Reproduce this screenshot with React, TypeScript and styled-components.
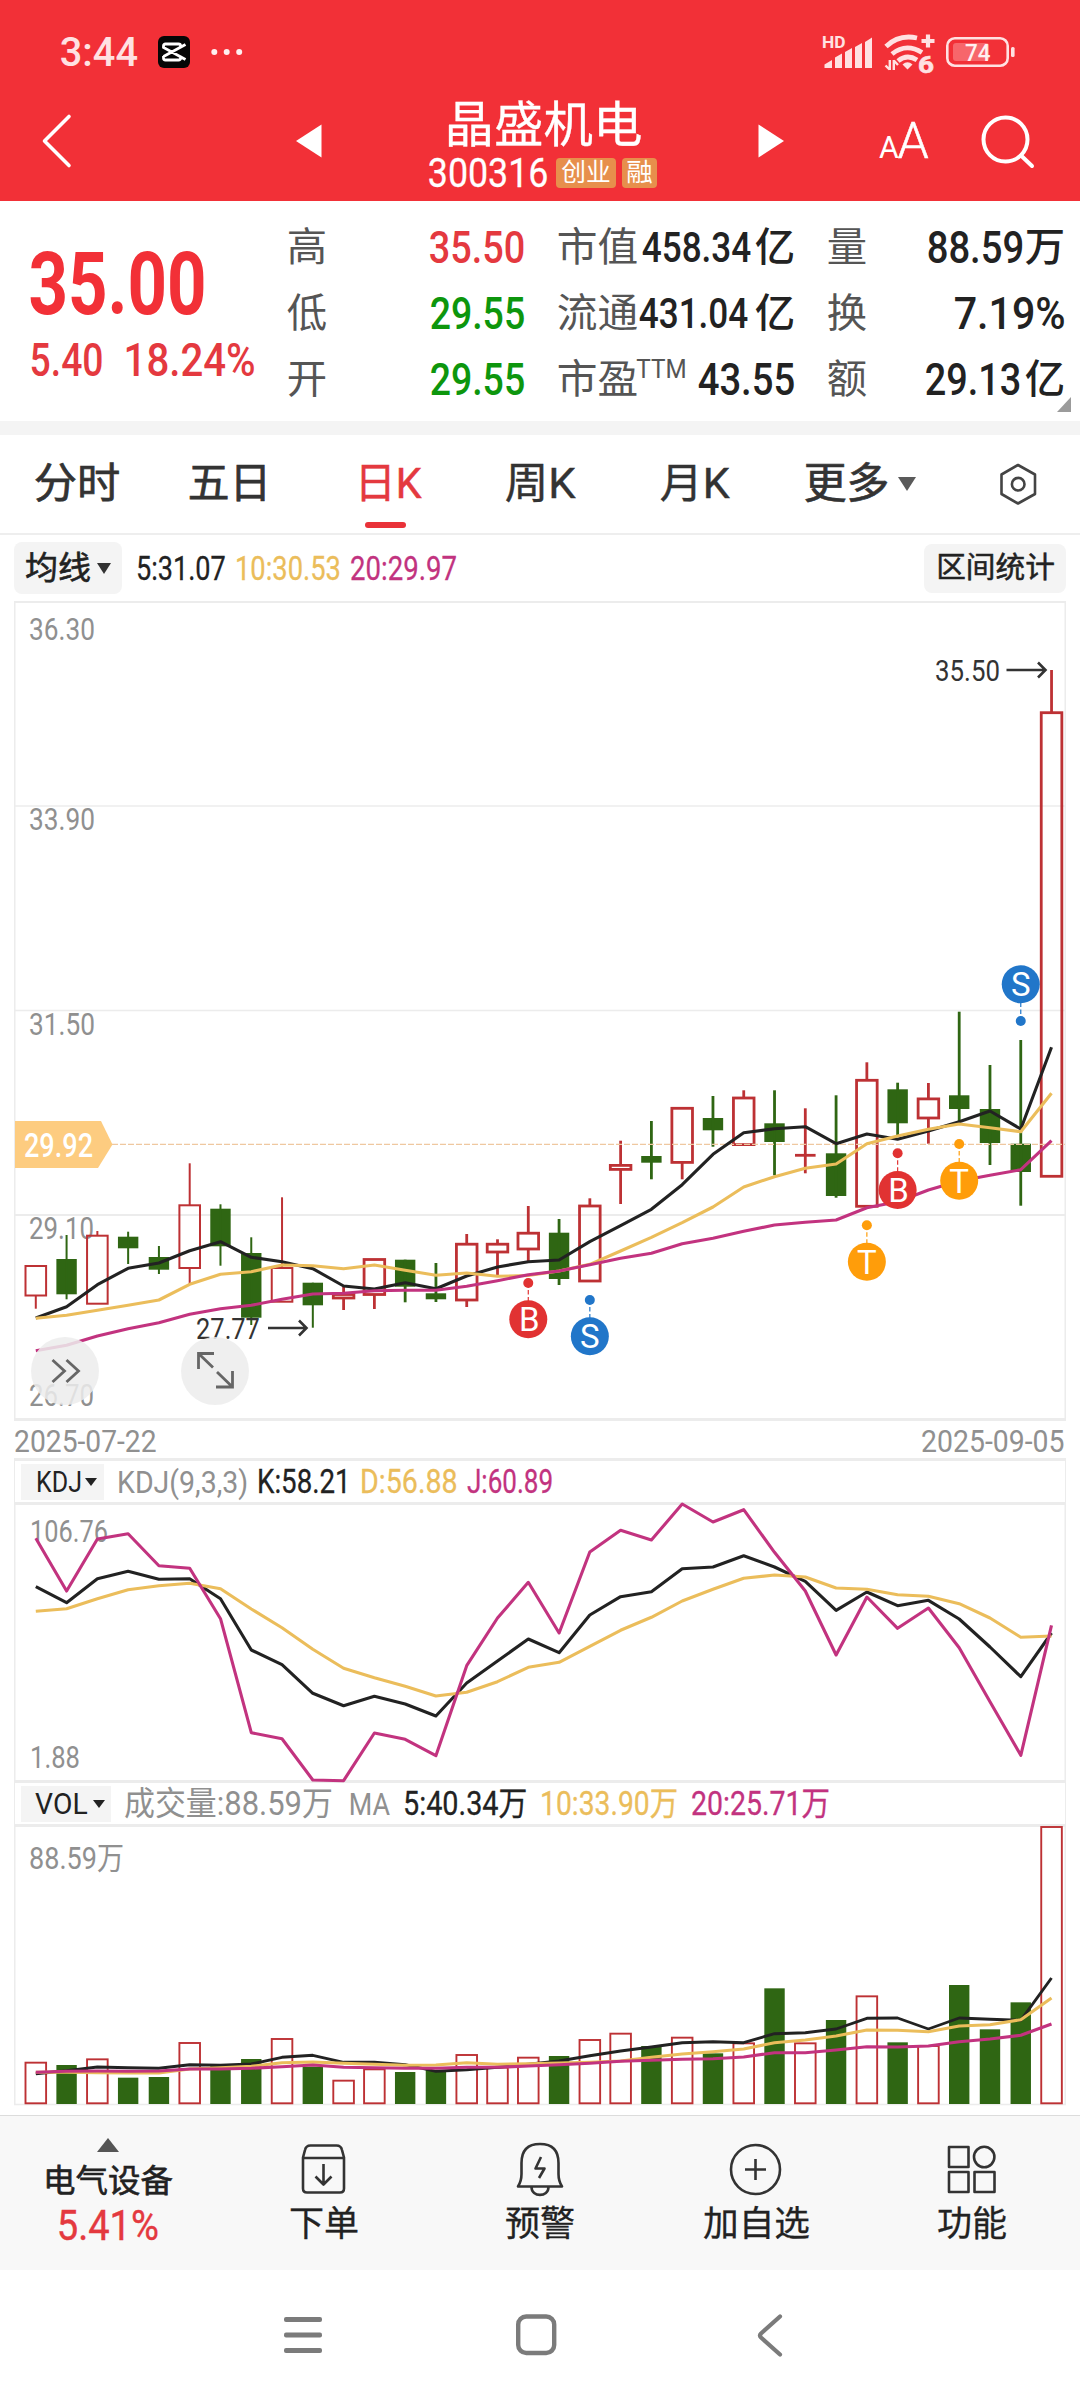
import React, { useLayoutEffect, useRef, useState } from "react";
import styled, { createGlobalStyle } from "styled-components";

const FONT = `Roboto, "Noto Sans CJK SC", "Liberation Sans", sans-serif`;

const C = {
  brand: "#f23037",
  up: "#e4393f",
  down: "#0d960d",
  ink: "#222222",
  label: "#555555",
  mute: "#909090",
  yellow: "#ebbd5b",
  magenta: "#c2337f",
  candleUp: "#bd3134",
  candleDown: "#2f6613",
  line: "#ececec",
};

const GlobalStyle = createGlobalStyle`
  * { box-sizing: border-box; }
  body { margin: 0; background: #fff; font-family: ${FONT}; }
  svg { display: block; }
`;

/* ---------- text set to a given width ---------- */

const FitBox = styled.span<{ $w: number; $lh: number }>`
  display: block;
  flex: none;
  width: ${(p) => p.$w}px;
  height: ${(p) => p.$lh}px;
  line-height: ${(p) => p.$lh}px;
`;
const FitInner = styled.span<{ $size: number; $color: string; $weight: number; $stroke: number }>`
  display: inline-block;
  white-space: pre;
  transform-origin: 0 50%;
  font-size: ${(p) => p.$size}px;
  font-weight: ${(p) => p.$weight};
  color: ${(p) => p.$color};
  -webkit-text-stroke: ${(p) => p.$stroke}px ${(p) => p.$color};
`;

type FitProps = {
  children: string;
  w: number;
  size: number;
  lh?: number;
  color?: string;
  weight?: number;
  stroke?: number;
};

function Fit({ children, w, size, lh, color = C.ink, weight = 400, stroke = 0 }: FitProps) {
  const ref = useRef<HTMLSpanElement>(null);
  const [natural, setNatural] = useState(0);
  useLayoutEffect(() => {
    if (ref.current) setNatural(ref.current.offsetWidth);
  }, [children, size, weight]);
  const scale = natural ? (w + size * 0.06) / natural : 1;
  return (
    <FitBox $w={w} $lh={lh ?? Math.round(size * 1.2)}>
      <FitInner
        ref={ref}
        $size={size}
        $color={color}
        $weight={weight}
        $stroke={stroke}
        style={{ transform: `translateX(${-size * 0.03}px) scaleX(${scale})` }}
      >
        {children}
      </FitInner>
    </FitBox>
  );
}

/* ---------- page ---------- */

const Page = styled.div`
  width: 1080px;
  height: 2400px;
  display: flex;
  flex-direction: column;
  background: #fff;
  overflow: hidden;
`;

/* ---------- header ---------- */

const Header = styled.header`
  height: 201px;
  flex: none;
  background: ${C.brand};
`;
const StatusBar = styled.div`
  height: 80px;
  padding: 24px 65px 0 61px;
  display: flex;
  align-items: center;
  justify-content: space-between;
`;
const StatusGroup = styled.div<{ $gap: number }>`
  display: flex;
  align-items: center;
  gap: ${(p) => p.$gap}px;
`;
const TitleBar = styled.div`
  height: 121px;
  display: grid;
  grid-template-columns: 296px 133px 329px 122px 100px 100px;
  align-items: center;
`;
const BackCell = styled.div`
  padding-left: 41px;
`;
const TitleColumn = styled.div`
  width: 228px;
  align-self: start;
  margin-top: 20px;
  display: flex;
  flex-direction: column;
  align-items: center;
`;
const CodeRow = styled.div`
  height: 44px;
  display: flex;
  align-items: center;
`;
const Badge = styled.span<{ $w: number; $ml: number }>`
  width: ${(p) => p.$w}px;
  height: 30px;
  margin-left: ${(p) => p.$ml}px;
  border-radius: 4px;
  background: #e78f4c;
  display: flex;
  align-items: center;
  justify-content: center;
`;
const TextSize = styled.div`
  display: flex;
  align-items: baseline;
  gap: 1px;
`;

/* ---------- quote ---------- */

const Quote = styled.section`
  position: relative;
  height: 220px;
  flex: none;
  display: flex;
`;
const PriceBlock = styled.div`
  width: 288px;
  padding: 43px 0 0 31px;
`;
const ChangeRow = styled.div`
  display: flex;
  gap: 23px;
  margin-top: 13px;
`;
const QuoteGrid = styled.div`
  padding-top: 14px;
  display: grid;
  grid-template-columns: 236px 236px 236px;
  grid-auto-rows: 66px;
  column-gap: 34px;
`;
const QuoteCell = styled.div`
  display: flex;
  align-items: center;
  justify-content: space-between;
`;
const Inline = styled.div<{ $gap?: number }>`
  display: flex;
  align-items: center;
  gap: ${(p) => p.$gap ?? 0}px;
`;
const Raised = styled.div`
  align-self: flex-start;
  margin-top: -2px;
`;
const Corner = styled.span`
  position: absolute;
  right: 9px;
  bottom: 9px;
  border-left: 14px solid transparent;
  border-bottom: 15px solid #9b9b9b;
`;
const Band = styled.div`
  height: 14px;
  flex: none;
  background: #f4f4f4;
`;

/* ---------- tabs ---------- */

const Tabs = styled.nav`
  height: 100px;
  flex: none;
  padding-left: 35px;
  border-bottom: 2px solid #eeeeee;
  display: grid;
  grid-template-columns: 154px 167px 150px 155px 144px 195px 40px;
`;
const Tab = styled.div<{ $active?: boolean }>`
  position: relative;
  height: 98px;
  display: flex;
  align-items: center;
  &::after {
    content: "";
    display: ${(p) => (p.$active ? "block" : "none")};
    position: absolute;
    left: 9px;
    bottom: 5px;
    width: 41px;
    height: 6px;
    border-radius: 3px;
    background: #e93239;
  }
`;
const Caret = styled.i<{ $w: number; $h: number; $color: string; $up?: boolean; $ml?: number }>`
  flex: none;
  margin-left: ${(p) => p.$ml ?? 0}px;
  border-left: ${(p) => p.$w / 2}px solid transparent;
  border-right: ${(p) => p.$w / 2}px solid transparent;
  ${(p) =>
    p.$up
      ? `border-bottom: ${p.$h}px solid ${p.$color};`
      : `border-top: ${p.$h}px solid ${p.$color};`}
`;

/* ---------- indicator bars ---------- */

const MaBar = styled.div`
  height: 66px;
  flex: none;
  padding: 0 14px;
  display: flex;
  align-items: center;
`;
const Chip = styled.div<{ $w: number; $h: number; $pl: number; $r?: number }>`
  width: ${(p) => p.$w}px;
  height: ${(p) => p.$h}px;
  padding-left: ${(p) => p.$pl}px;
  border-radius: ${(p) => p.$r ?? 0}px;
  background: #f4f4f4;
  display: flex;
  align-items: center;
  flex: none;
`;
const Values = styled.div<{ $ml: number }>`
  display: flex;
  align-items: center;
  flex: 1;
  gap: 11px;
  margin-left: ${(p) => p.$ml}px;
`;
const DateRow = styled.div`
  height: 37px;
  flex: none;
  padding: 3px 16px 0 15px;
  display: flex;
  align-items: center;
  justify-content: space-between;
`;
const IndicatorBar = styled.div<{ $h: number; $top: number }>`
  height: ${(p) => p.$h}px;
  flex: none;
  margin: 0 14px;
  padding-left: 6px;
  border: solid ${C.line};
  border-width: ${(p) => p.$top}px 1px 0;
  display: flex;
  align-items: center;
`;
const ChartArea = styled.div`
  position: relative;
  flex: none;
`;
const RoundButton = styled.button<{ $left: number }>`
  position: absolute;
  left: ${(p) => p.$left}px;
  bottom: 16px;
  width: 68px;
  height: 68px;
  padding: 0;
  border: 0;
  border-radius: 50%;
  background: rgba(236, 236, 236, 0.86);
`;

/* ---------- bottom ---------- */

const BottomNav = styled.nav`
  height: 155px;
  flex: none;
  background: #f8f8f8;
  border-top: 1px solid #dcdcdc;
  display: grid;
  grid-template-columns: repeat(5, 216px);
`;
const NavItem = styled.div`
  display: flex;
  flex-direction: column;
  align-items: center;
  padding-top: 25px;
`;
const SectorItem = styled(NavItem)`
  padding-top: 22px;
`;
const NavLabel = styled.div`
  margin-top: 10px;
`;
const SystemNav = styled.footer`
  height: 130px;
  flex: none;
  display: grid;
  grid-template-columns: 284px 232px 240px 1fr;
  align-items: center;
`;

/* ---------- data (vertical positions on the page) ---------- */

const X = (i: number) => 35.8 + i * 30.78;

// [kind, bodyTop, bodyBottom, high, low]
type Candle = ["r" | "g", number, number, number, number];
const candles: Candle[] = [
  ["r", 1266, 1295.5, 1266, 1308.7],
  ["g", 1259, 1294.3, 1235, 1299.3],
  ["r", 1235.7, 1303.7, 1231, 1303.7],
  ["g", 1236.7, 1248.3, 1231.7, 1264],
  ["g", 1257, 1269.7, 1246, 1274],
  ["r", 1205.3, 1268, 1163.3, 1284.7],
  ["g", 1208.7, 1246.3, 1204.3, 1265.7],
  ["g", 1253, 1317.7, 1237.3, 1325],
  ["r", 1268, 1301.7, 1197.3, 1301.7],
  ["g", 1282.7, 1305.3, 1282.7, 1327.7],
  ["r", 1294.5, 1298, 1287, 1310],
  ["r", 1259.5, 1294.5, 1259.5, 1309],
  ["g", 1259.7, 1286.7, 1259.7, 1302.3],
  ["g", 1293.3, 1299.3, 1263, 1302],
  ["r", 1244.2, 1300, 1234, 1307],
  ["r", 1244.2, 1252, 1239.3, 1275.7],
  ["r", 1233.2, 1249, 1206, 1262.7],
  ["g", 1232.7, 1279, 1219, 1285],
  ["r", 1206, 1281, 1198.3, 1281],
  ["r", 1165.4, 1169.4, 1140.7, 1204],
  ["g", 1156, 1162.7, 1121, 1179.3],
  ["r", 1108.3, 1162.4, 1108.3, 1179.3],
  ["g", 1118, 1130.3, 1096, 1146.7],
  ["r", 1098, 1144.6, 1090.3, 1144.6],
  ["g", 1123.3, 1142, 1090.3, 1175.3],
  ["r", 1155.3, 1155.3, 1108.3, 1173.3],
  ["g", 1153.3, 1196, 1095.3, 1197.7],
  ["r", 1080.3, 1206.3, 1062.3, 1206.3],
  ["g", 1089.3, 1123.3, 1082.7, 1137],
  ["r", 1098.9, 1118, 1083, 1143.7],
  ["g", 1095.3, 1109, 1011.7, 1123],
  ["g", 1109, 1143, 1065, 1165],
  ["g", 1143.7, 1172, 1040, 1205.7],
  ["r", 712.7, 1176.3, 670, 1176.3],
];

const ma5 = [1318, 1306.7, 1284.7, 1268.3, 1263, 1250.7, 1241.7, 1257.3, 1261.7, 1268.7, 1286, 1289, 1282.7, 1288.7, 1276, 1267, 1261.7, 1260, 1241.7, 1225.7, 1209.3, 1184.7, 1154.3, 1132.7, 1128.7, 1126.7, 1143.7, 1134, 1139.3, 1131, 1121.7, 1111, 1129, 1047.3];
const ma10 = [1318.3, 1315.3, 1310.3, 1305.3, 1300, 1284.3, 1274.3, 1271.7, 1265, 1265.7, 1268.7, 1265, 1270.3, 1275.3, 1273, 1276.3, 1275.5, 1271, 1264.3, 1251, 1237.3, 1222.7, 1207, 1187, 1176.7, 1168.3, 1164, 1143.7, 1136, 1129.3, 1124, 1127.7, 1131.7, 1093.3];
const ma20 = [1350.7, 1345.3, 1336, 1328.7, 1322.7, 1314.3, 1308.7, 1305.3, 1299.3, 1294, 1293.3, 1290.7, 1290.3, 1290.3, 1286.3, 1280.7, 1274.7, 1271, 1264.7, 1258.3, 1253.3, 1243.7, 1238.3, 1231.3, 1225, 1222.3, 1220, 1207.7, 1201.7, 1190, 1181, 1175.3, 1169.7, 1140.7];

// offsets in thirds of a pixel below the top of each sub chart
const third = (base: number, list: number[]) => list.map((v) => base + v / 3);
const kdjJ = third(1410, [385, 543, 387, 371, 467, 475, 626, 968, 986, 1110, 1112, 969, 988, 1037, 767, 624, 517, 669, 426, 361, 390, 282, 336, 299, 427, 543, 735, 561, 655, 594, 713, 875, 1036, 646]);
const kdjK = third(1410, [530, 578, 506, 484, 508, 506, 566, 720, 764, 850, 887, 859, 882, 918, 819, 753, 687, 728, 615, 560, 545, 476, 471, 437, 471, 514, 601, 546, 587, 571, 627, 711, 800, 669]);
const kdjD = third(1410, [604, 596, 566, 539, 527, 520, 536, 597, 653, 718, 775, 803, 829, 858, 847, 815, 772, 757, 709, 661, 622, 573, 538, 505, 495, 501, 534, 538, 554, 559, 581, 624, 682, 678]);

const volTop = third(1770, [878, 885, 868, 923, 921, 819, 885, 867, 807, 890, 932, 898, 906, 900, 855, 893, 863, 858, 810, 791, 828, 803, 850, 820, 655, 820, 750, 679, 817, 828, 645, 778, 697, 171]);
const vol5 = third(1770, [911, 902, 891, 893, 895, 884, 886, 882, 862, 856, 877, 877, 884, 904, 899, 892, 883, 873, 857, 843, 831, 818, 815, 818, 791, 788, 777, 745, 744, 777, 744, 748, 751, 624]);
const vol10 = third(1770, [907, 907, 908, 909, 909, 897, 893, 889, 878, 876, 880, 883, 886, 885, 878, 883, 881, 879, 877, 873, 862, 852, 845, 837, 818, 810, 798, 780, 781, 785, 768, 764, 749, 684]);
const vol20 = third(1770, [907, 904, 903, 904, 903, 897, 897, 895, 890, 885, 892, 893, 895, 895, 892, 892, 888, 884, 880, 874, 871, 868, 866, 861, 848, 848, 840, 830, 831, 828, 815, 807, 796, 762]);

type Marker = { i: number; dot: number; cy: number; t: string; c: string };
const markers: Marker[] = [
  { i: 16, dot: 1283, cy: 1319.3, t: "B", c: "#e13232" },
  { i: 18, dot: 1300, cy: 1336.3, t: "S", c: "#2176c9" },
  { i: 27, dot: 1225.3, cy: 1261.7, t: "T", c: "#ff9d0a" },
  { i: 28, dot: 1153.3, cy: 1190, t: "B", c: "#e13232" },
  { i: 30, dot: 1144, cy: 1180.7, t: "T", c: "#ff9d0a" },
  { i: 32, dot: 1021, cy: 984.3, t: "S", c: "#2176c9" },
];

/* ---------- chart parts ---------- */

const Curve = ({ ys, color, w = 3.1 }: { ys: number[]; color: string; w?: number }) => (
  <polyline
    points={ys.map((y, i) => `${X(i).toFixed(1)},${y.toFixed(1)}`).join(" ")}
    fill="none"
    stroke={color}
    strokeWidth={w}
    strokeLinejoin="round"
  />
);

const Rule = ({ y, w = 2 }: { y: number; w?: number }) => (
  <line x1={14} x2={1066} y1={y} y2={y} stroke={C.line} strokeWidth={w} />
);

const Sides = ({ a, b }: { a: number; b: number }) => (
  <g stroke={C.line} strokeWidth={1.5}>
    <line x1={14.75} x2={14.75} y1={a} y2={b} />
    <line x1={1065.25} x2={1065.25} y1={a} y2={b} />
  </g>
);

const Label = ({ x, cy, w, size = 31, color = C.mute, weight = 400, children }: {
  x: number; cy: number; w: number; size?: number; color?: string; weight?: number; children: string;
}) => (
  <text
    x={x - size * 0.03}
    y={cy + size * 0.356}
    fontSize={size}
    fontWeight={weight}
    fill={color}
    fontFamily={FONT}
    textLength={w + size * 0.06}
    lengthAdjust="spacingAndGlyphs"
  >
    {children}
  </text>
);

const PriceChart = () => (
  <svg width={1080} height={820} viewBox="0 601 1080 820">
    <Sides a={601} b={1420} />
    <Rule y={602} />
    <Rule y={806} w={1.5} />
    <Rule y={1010.5} w={1.5} />
    <Rule y={1215} />
    <Rule y={1419.5} w={3} />
    <Label x={30} cy={629} w={64}>36.30</Label>
    <Label x={30} cy={818.5} w={64}>33.90</Label>
    <Label x={30} cy={1023.5} w={64}>31.50</Label>
    <Label x={30} cy={1227.5} w={63}>29.10</Label>
    <Label x={30} cy={1395} w={63}>26.70</Label>
    {candles.map(([k, t, b, h, l], i) => {
      const sw = i < 10 ? 2 : 2.8;
      const x = X(i);
      return k === "g" ? (
        <g key={i} fill={C.candleDown}>
          <rect x={x - 10.2} y={t} width={20.4} height={b - t} />
          <rect x={x - sw / 2} y={h} width={sw} height={l - h} />
        </g>
      ) : (
        <g key={i} fill="none" stroke={C.candleUp} strokeWidth={sw}>
          {h < t && <line x1={x} x2={x} y1={h} y2={t} />}
          {l > b && <line x1={x} x2={x} y1={b} y2={l} />}
          {t === b ? <line x1={x - 10.3} x2={x + 10.3} y1={t} y2={t} /> : <rect x={x - 10.3} y={t} width={20.6} height={b - t} />}
        </g>
      );
    })}
    <line x1={112} x2={1065} y1={1144.4} y2={1144.4} stroke="#efc8a0" strokeWidth={1.4} strokeDasharray="6 2" />
    <Curve ys={ma5} color={C.ink} />
    <Curve ys={ma10} color={C.yellow} />
    <Curve ys={ma20} color={C.magenta} />
    <polygon points="15,1121 101,1121 112.5,1144.4 98,1168 15,1168" fill="#fdcc80" />
    <Label x={25} cy={1145.3} w={67} size={34} color="#ffffff" weight={500}>29.92</Label>
    <Label x={197} cy={1328} w={62} size={30} color="#333333">27.77</Label>
    <Label x={936} cy={670.5} w={63} size={30} color="#333333">35.50</Label>
    <g fill="none" stroke="#333333" strokeWidth={2.6}>
      <path d="M268 1328H306M299 1320.500L306.500 1328L299 1335.500" />
      <path d="M1006.500 670H1045M1038 662.500L1045.500 670L1038 677.500" />
    </g>
    {markers.map(({ i, dot, cy, t, c }) => (
      <g key={i}>
        <line x1={X(i)} x2={X(i)} y1={dot} y2={cy} stroke={c} strokeWidth={1.2} strokeDasharray="4.500 2.500" />
        <circle cx={X(i)} cy={dot} r={5} fill={c} />
        <circle cx={X(i)} cy={cy} r={19} fill={c} />
        <text x={X(i) + (t === "B" ? 1 : 0)} y={cy + 12} fontSize={33} textAnchor="middle" fill="#fff" fontFamily={FONT}>
          {t}
        </text>
      </g>
    ))}
  </svg>
);

const KdjChart = () => (
  <svg width={1080} height={281} viewBox="0 1502 1080 281">
    <Sides a={1502} b={1783} />
    <Rule y={1503.5} w={3} />
    <Rule y={1781.5} w={3} />
    <Label x={31} cy={1530.500} w={76}>106.76</Label>
    <Label x={31} cy={1756.500} w={48}>1.88</Label>
    <Curve ys={kdjK} color={C.ink} />
    <Curve ys={kdjD} color={C.yellow} />
    <Curve ys={kdjJ} color={C.magenta} />
  </svg>
);

const VolChart = () => (
  <svg width={1080} height={291} viewBox="0 1824 1080 291">
    <Sides a={1824} b={2105} />
    <Rule y={1825.5} w={3} />
    <Rule y={2104.5} w={1.5} />
    <Label x={30} cy={1857.500} w={93}>88.59万</Label>
    {candles.map(([k], i) =>
      k === "g" ? (
        <rect key={i} x={X(i) - 10.2} y={volTop[i]} width={20.4} height={2104 - volTop[i]} fill={C.candleDown} />
      ) : (
        <rect key={i} x={X(i) - 10.3} y={volTop[i]} width={20.6} height={2103.3 - volTop[i]} fill="none" stroke={C.candleUp} strokeWidth={1.9} />
      )
    )}
    <Curve ys={vol5} color={C.ink} w={2.9} />
    <Curve ys={vol10} color={C.yellow} />
    <Curve ys={vol20} color={C.magenta} />
  </svg>
);

/* ---------- icons ---------- */

const soft = "#ffe1e2";

const AppIcon = () => (
  <svg width={32} height={32} viewBox="0 0 32 32">
    <rect width={32} height={32} rx={6} fill="#060606" />
    <path d="M22.500 11.500V9.500Q22.500 8 20.500 8H7.500Q5.500 8 5.500 10V11.500L27.500 23.500M5.500 20V22Q5.500 24 7.500 24H20.500Q22.500 24 22.500 22V20.500M5.500 20.500L27.500 8.500" fill="none" stroke="#fff" strokeWidth={2.8} />
  </svg>
);
const Dots = () => (
  <svg width={32} height={8} viewBox="0 0 32 8" fill="#fff0f0">
    <circle cx={3.300} cy={4} r={3} />
    <circle cx={15.700} cy={4} r={3} />
    <circle cx={28.200} cy={4} r={3} />
  </svg>
);
const StatusIcons = () => (
  <svg width={193} height={56} viewBox="822 24 193 56">
    <text x={822} y={48} fontSize={16} fontWeight={700} fill={soft} fontFamily={FONT} textLength={23.500} lengthAdjust="spacingAndGlyphs">HD</text>
    <g fill={soft}>
      <path d="M824.500 68V64.500L832 60V68Z" />
      <path d="M835 68V57.500L842 53.500V68Z" />
      <path d="M845 68V52L852 48V68Z" />
      <path d="M855 68V47L862 43V68Z" />
      <path d="M865 68V42L872 37.500V68Z" />
    </g>
    <g fill="none" stroke={soft} strokeWidth={4.800}>
      <path d="M886 46.500Q899 34 917 38" />
      <path d="M892 54Q906 42.500 922 52.500" />
      <path d="M898 61Q907 53.500 917 60" />
      <path d="M921.500 41H934.500M928 34.500V47.500" strokeWidth={4.200} />
    </g>
    <path d="M902.500 64.500Q907.500 60 912.500 64.500L907.500 69.500Z" fill={soft} />
    <g fill="none" stroke={soft} strokeWidth={2.400}>
      <path d="M889.800 60V70M885.500 65.500L889.500 69.500" />
      <path d="M893.800 70V60M893.800 60.500L898 65" />
    </g>
    <text x={918} y={72.500} fontSize={23} fontWeight={700} fill={soft} stroke={soft} strokeWidth={0.600} fontFamily={FONT} textLength={16} lengthAdjust="spacingAndGlyphs">6</text>
    <rect x={947.300} y={38.300} width={60.400} height={27.400} rx={7.500} fill="none" stroke={soft} strokeWidth={2.600} />
    <rect x={953} y={43} width={36} height={18} rx={3} fill="#f7666b" />
    <rect x={1011} y={47} width={3.600} height={10} rx={1.500} fill={soft} />
    <text x={965} y={60.500} fontSize={23} fontWeight={500} fill="#fff0f0" fontFamily={FONT} textLength={25.500} lengthAdjust="spacingAndGlyphs">74</text>
  </svg>
);
const BackIcon = () => (
  <svg width={32} height={56} viewBox="41 112.500 32 56" fill="none" stroke="#fff" strokeWidth={3.600} strokeLinecap="round" strokeLinejoin="round">
    <path d="M69 116L44.500 140.500L69 165" />
  </svg>
);
const Arrow = ({ right }: { right?: boolean }) => (
  <svg width={26} height={34} viewBox="0 0 26 34">
    <path d={right ? "M0.500 0.500L26 17L0.500 33.500Z" : "M25.500 0.500L0 17L25.500 33.500Z"} fill="#fff" />
  </svg>
);
const SearchIcon = () => (
  <svg width={56} height={56} viewBox="980 112 56 56" fill="none" stroke="#fff" strokeWidth={4} strokeLinecap="round">
    <circle cx={1005.500} cy={138.500} r={22} />
    <path d="M1021 154.500L1032 165" />
  </svg>
);
const HexIcon = () => (
  <svg width={40} height={42} viewBox="0 0 40 42" fill="none" stroke="#444" strokeWidth={2.600} strokeLinejoin="round">
    <path d="M18 2L35 11.500V31L18 40.500L1.500 31V11.500Z" />
    <circle cx={18.200} cy={21.200} r={6.300} />
  </svg>
);
const NavSvg = ({ children }: { children: React.ReactNode }) => (
  <svg width={56} height={56} viewBox="0 0 56 56" fill="none" stroke="#333" strokeWidth={2.600} strokeLinejoin="round">
    {children}
  </svg>
);

/* ---------- app ---------- */

const quote: { label: string; lw?: number; sup?: boolean; value: string; vw: number; size?: number; unit?: string; gap?: number; color?: string }[] = [
  { label: "高", value: "35.50", vw: 94, color: C.up },
  { label: "市值", lw: 79, value: "458.34", vw: 107, size: 42, unit: "亿", gap: 6 },
  { label: "量", value: "88.59", vw: 95, unit: "万", gap: 3 },
  { label: "低", value: "29.55", vw: 93, color: C.down },
  { label: "流通", lw: 79, value: "431.04", vw: 107, size: 42, unit: "亿", gap: 9 },
  { label: "换", value: "7.19%", vw: 109 },
  { label: "开", value: "29.55", vw: 93, color: C.down },
  { label: "市盈", lw: 79, sup: true, value: "43.55", vw: 95 },
  { label: "额", value: "29.13", vw: 94, unit: "亿", gap: 6 },
];

export default function App() {
  return (
    <Page>
      <GlobalStyle />
      <Header>
        <StatusBar>
          <StatusGroup $gap={21}>
            <Fit w={76} size={41} lh={46} weight={500} color={soft}>3:44</Fit>
            <AppIcon />
            <Dots />
          </StatusGroup>
          <StatusIcons />
        </StatusBar>
        <TitleBar>
          <BackCell><BackIcon /></BackCell>
          <Arrow />
          <TitleColumn>
            <Fit w={195} size={49} lh={51} color="#fff" stroke={0.3}>晶盛机电</Fit>
            <CodeRow>
              <Fit w={118} size={41} lh={46} color="#fff" stroke={0.3}>300316</Fit>
              <Badge $w={60} $ml={9}><Fit w={48} size={25} lh={30} color="#fff">创业</Fit></Badge>
              <Badge $w={35} $ml={6}><Fit w={25} size={25} lh={30} color="#fff">融</Fit></Badge>
            </CodeRow>
          </TitleColumn>
          <Arrow right />
          <TextSize>
            <Fit w={18} size={32} lh={42} color="#fff">A</Fit>
            <Fit w={28} size={50} lh={54} weight={300} color="#fff" stroke={0.5}>A</Fit>
          </TextSize>
          <SearchIcon />
        </TitleBar>
      </Header>

      <Quote>
        <PriceBlock>
          <Fit w={173} size={87} lh={80} weight={700} color={C.brand}>35.00</Fit>
          <ChangeRow>
            <Fit w={71} size={46} lh={46} weight={500} color={C.up}>5.40</Fit>
            <Fit w={129} size={46} lh={46} weight={500} color={C.up}>18.24%</Fit>
          </ChangeRow>
        </PriceBlock>
        <QuoteGrid>
          {quote.map((q, i) => (
            <QuoteCell key={i}>
              <Inline>
                <Fit w={q.lw ?? 38} size={40} color={C.label}>{q.label}</Fit>
                {q.sup && <Raised><Fit w={49} size={25} lh={32} color={C.label}>TTM</Fit></Raised>}
              </Inline>
              <Inline $gap={q.gap}>
                <Fit w={q.vw} size={q.size ?? 45} weight={500} color={q.color}>{q.value}</Fit>
                {q.unit && <Fit w={38} size={40} weight={500}>{q.unit}</Fit>}
              </Inline>
            </QuoteCell>
          ))}
        </QuoteGrid>
        <Corner />
      </Quote>
      <Band />

      <Tabs>
        <Tab><Fit w={84} size={42} color="#333" stroke={0.7}>分时</Fit></Tab>
        <Tab><Fit w={81} size={42} color="#333" stroke={0.7}>五日</Fit></Tab>
        <Tab $active><Fit w={64} size={42} color={C.up} stroke={0.5}>日K</Fit></Tab>
        <Tab><Fit w={68} size={42} color="#333" stroke={0.4}>周K</Fit></Tab>
        <Tab><Fit w={67} size={42} color="#333" stroke={0.4}>月K</Fit></Tab>
        <Tab>
          <Fit w={83} size={42} color="#333" stroke={0.7}>更多</Fit>
          <Caret $w={19} $h={14} $color="#5a5a5a" $ml={10} />
        </Tab>
        <Tab><HexIcon /></Tab>
      </Tabs>

      <MaBar>
        <Chip $w={108} $h={52} $pl={12} $r={8}>
          <Fit w={64} size={32} stroke={0.6}>均线</Fit>
          <Caret $w={14} $h={11} $color="#333" $ml={7} />
        </Chip>
        <Values $ml={15}>
          <Fit w={88} size={34} stroke={0.3}>5:31.07</Fit>
          <Fit w={104} size={34} color={C.yellow} stroke={0.3}>10:30.53</Fit>
          <Fit w={105} size={34} color={C.magenta} stroke={0.3}>20:29.97</Fit>
        </Values>
        <Chip $w={142} $h={49} $pl={13} $r={8}>
          <Fit w={117} size={29} stroke={0.5}>区间统计</Fit>
        </Chip>
      </MaBar>

      <ChartArea>
        <PriceChart />
        <RoundButton $left={31} aria-label="前进">
          <svg width={68} height={68} viewBox="31 1337 68 68" fill="none" stroke="#666" strokeWidth={2.800}>
            <path d="M52.500 1360L64.500 1371L52.500 1382M66.500 1360L78.500 1371L66.500 1382" />
          </svg>
        </RoundButton>
        <RoundButton $left={181} aria-label="全屏">
          <svg width={68} height={68} viewBox="181 1337 68 68" fill="none" stroke="#666" strokeWidth={2.800}>
            <path d="M198.500 1369V1353.500H214M198.500 1353.500L213 1367.500M232.500 1371V1387H216M232.500 1387L217 1372" />
          </svg>
        </RoundButton>
      </ChartArea>
      <DateRow>
        <Fit w={141} size={31} color={C.mute}>2025-07-22</Fit>
        <Fit w={142} size={31} color={C.mute}>2025-09-05</Fit>
      </DateRow>

      <IndicatorBar $h={44} $top={3}>
        <Chip $w={83} $h={36} $pl={16}>
          <Fit w={44} size={30}>KDJ</Fit>
          <Caret $w={12} $h={8} $color="#222" $ml={4} />
        </Chip>
        <Values $ml={14}>
          <Fit w={129} size={32} color={C.mute}>KDJ(9,3,3)</Fit>
          <Fit w={92} size={33} stroke={0.3}>K:58.21</Fit>
          <Fit w={96} size={33} color={C.yellow} stroke={0.3}>D:56.88</Fit>
          <Inline $gap={0}>
            <Fit w={84} size={33} color={C.magenta} stroke={0.3}>J:60.89</Fit>
          </Inline>
        </Values>
      </IndicatorBar>
      <KdjChart />

      <IndicatorBar $h={41} $top={0}>
        <Chip $w={90} $h={36} $pl={15}>
          <Fit w={51} size={30}>VOL</Fit>
          <Caret $w={12} $h={8} $color="#222" $ml={6} />
        </Chip>
        <Values $ml={14}>
          <Fit w={207} size={33} color={C.mute}>成交量:88.59万</Fit>
          <Inline $gap={15}>
            <Fit w={46} size={32} color={C.mute}> MA</Fit>
            <Fit w={122} size={33} stroke={0.3}>5:40.34万</Fit>
            <Fit w={136} size={33} color={C.yellow} stroke={0.3}>10:33.90万</Fit>
            <Fit w={137} size={33} color={C.magenta} stroke={0.3}>20:25.71万</Fit>
          </Inline>
        </Values>
      </IndicatorBar>
      <VolChart />

      <BottomNav>
        <SectorItem>
          <Caret $w={22} $h={14} $color="#555" $up />
          <Fit w={128} size={32} lh={58} stroke={0.6}>电气设备</Fit>
          <Fit w={100} size={42} lh={32} color={C.up} stroke={0.4}>5.41%</Fit>
        </SectorItem>
        <NavItem>
          <NavSvg>
            <path d="M15 4H41Q45.500 4 46.500 8.500L48.500 16V47Q48.500 51 44.500 51H11.500Q7.500 51 7.500 47V16L9.500 8.500Q10.500 4 15 4ZM7.500 16.500H48.500" transform="translate(-0.500 0.500)" />
            <path d="M27.500 23V43M19.500 35.500L27.500 43.500L35.500 35.500" />
          </NavSvg>
          <NavLabel><Fit w={68} size={35} lh={35} stroke={0.3}>下单</Fit></NavLabel>
        </NavItem>
        <NavItem>
          <NavSvg>
            <path d="M6 45.500Q9.500 40 9.500 33V22Q9.500 3 28 3Q46.500 3 46.500 22V33Q46.500 40 50 45.500ZM19.500 46C19.500 56.500 36.500 56.500 36.500 46" />
            <path d="M29 16L23.500 27.500H32.500L27 37" />
          </NavSvg>
          <NavLabel><Fit w={68} size={35} lh={35} stroke={0.3}>预警</Fit></NavLabel>
        </NavItem>
        <NavItem>
          <NavSvg>
            <circle cx={27.500} cy={28.500} r={24.500} />
            <path d="M17 28.500H38M27.500 18V39" />
          </NavSvg>
          <NavLabel><Fit w={105} size={35} lh={35} stroke={0.3}>加自选</Fit></NavLabel>
        </NavItem>
        <NavItem>
          <NavSvg>
            <rect x={5} y={6} width={19.500} height={20} />
            <circle cx={40.200} cy={16} r={10.200} />
            <rect x={5} y={31} width={19.500} height={20} />
            <rect x={30.500} y={31} width={20} height={20} />
          </NavSvg>
          <NavLabel><Fit w={68} size={35} lh={35} stroke={0.3}>功能</Fit></NavLabel>
        </NavItem>
      </BottomNav>

      <SystemNav>
        <span />
        <svg width={38} height={38} viewBox="0 0 38 38" fill="#7b7b7b">
          <rect y={1} width={38} height={5} rx={2} />
          <rect y={16.500} width={38} height={5} rx={2} />
          <rect y={32} width={38} height={5} rx={2} />
        </svg>
        <svg width={42} height={42} viewBox="0 0 42 42" fill="none" stroke="#7b7b7b" strokeWidth={4.400}>
          <rect x={2.200} y={2.500} width={36} height={36.500} rx={8} />
        </svg>
        <svg width={28} height={44} viewBox="0 0 28 44" fill="none" stroke="#7b7b7b" strokeWidth={4.200} strokeLinejoin="round" strokeLinecap="round">
          <path d="M24 3.500L5 20.500Q3 22.500 5 24.500L24 41.500" />
        </svg>
      </SystemNav>
    </Page>
  );
}
